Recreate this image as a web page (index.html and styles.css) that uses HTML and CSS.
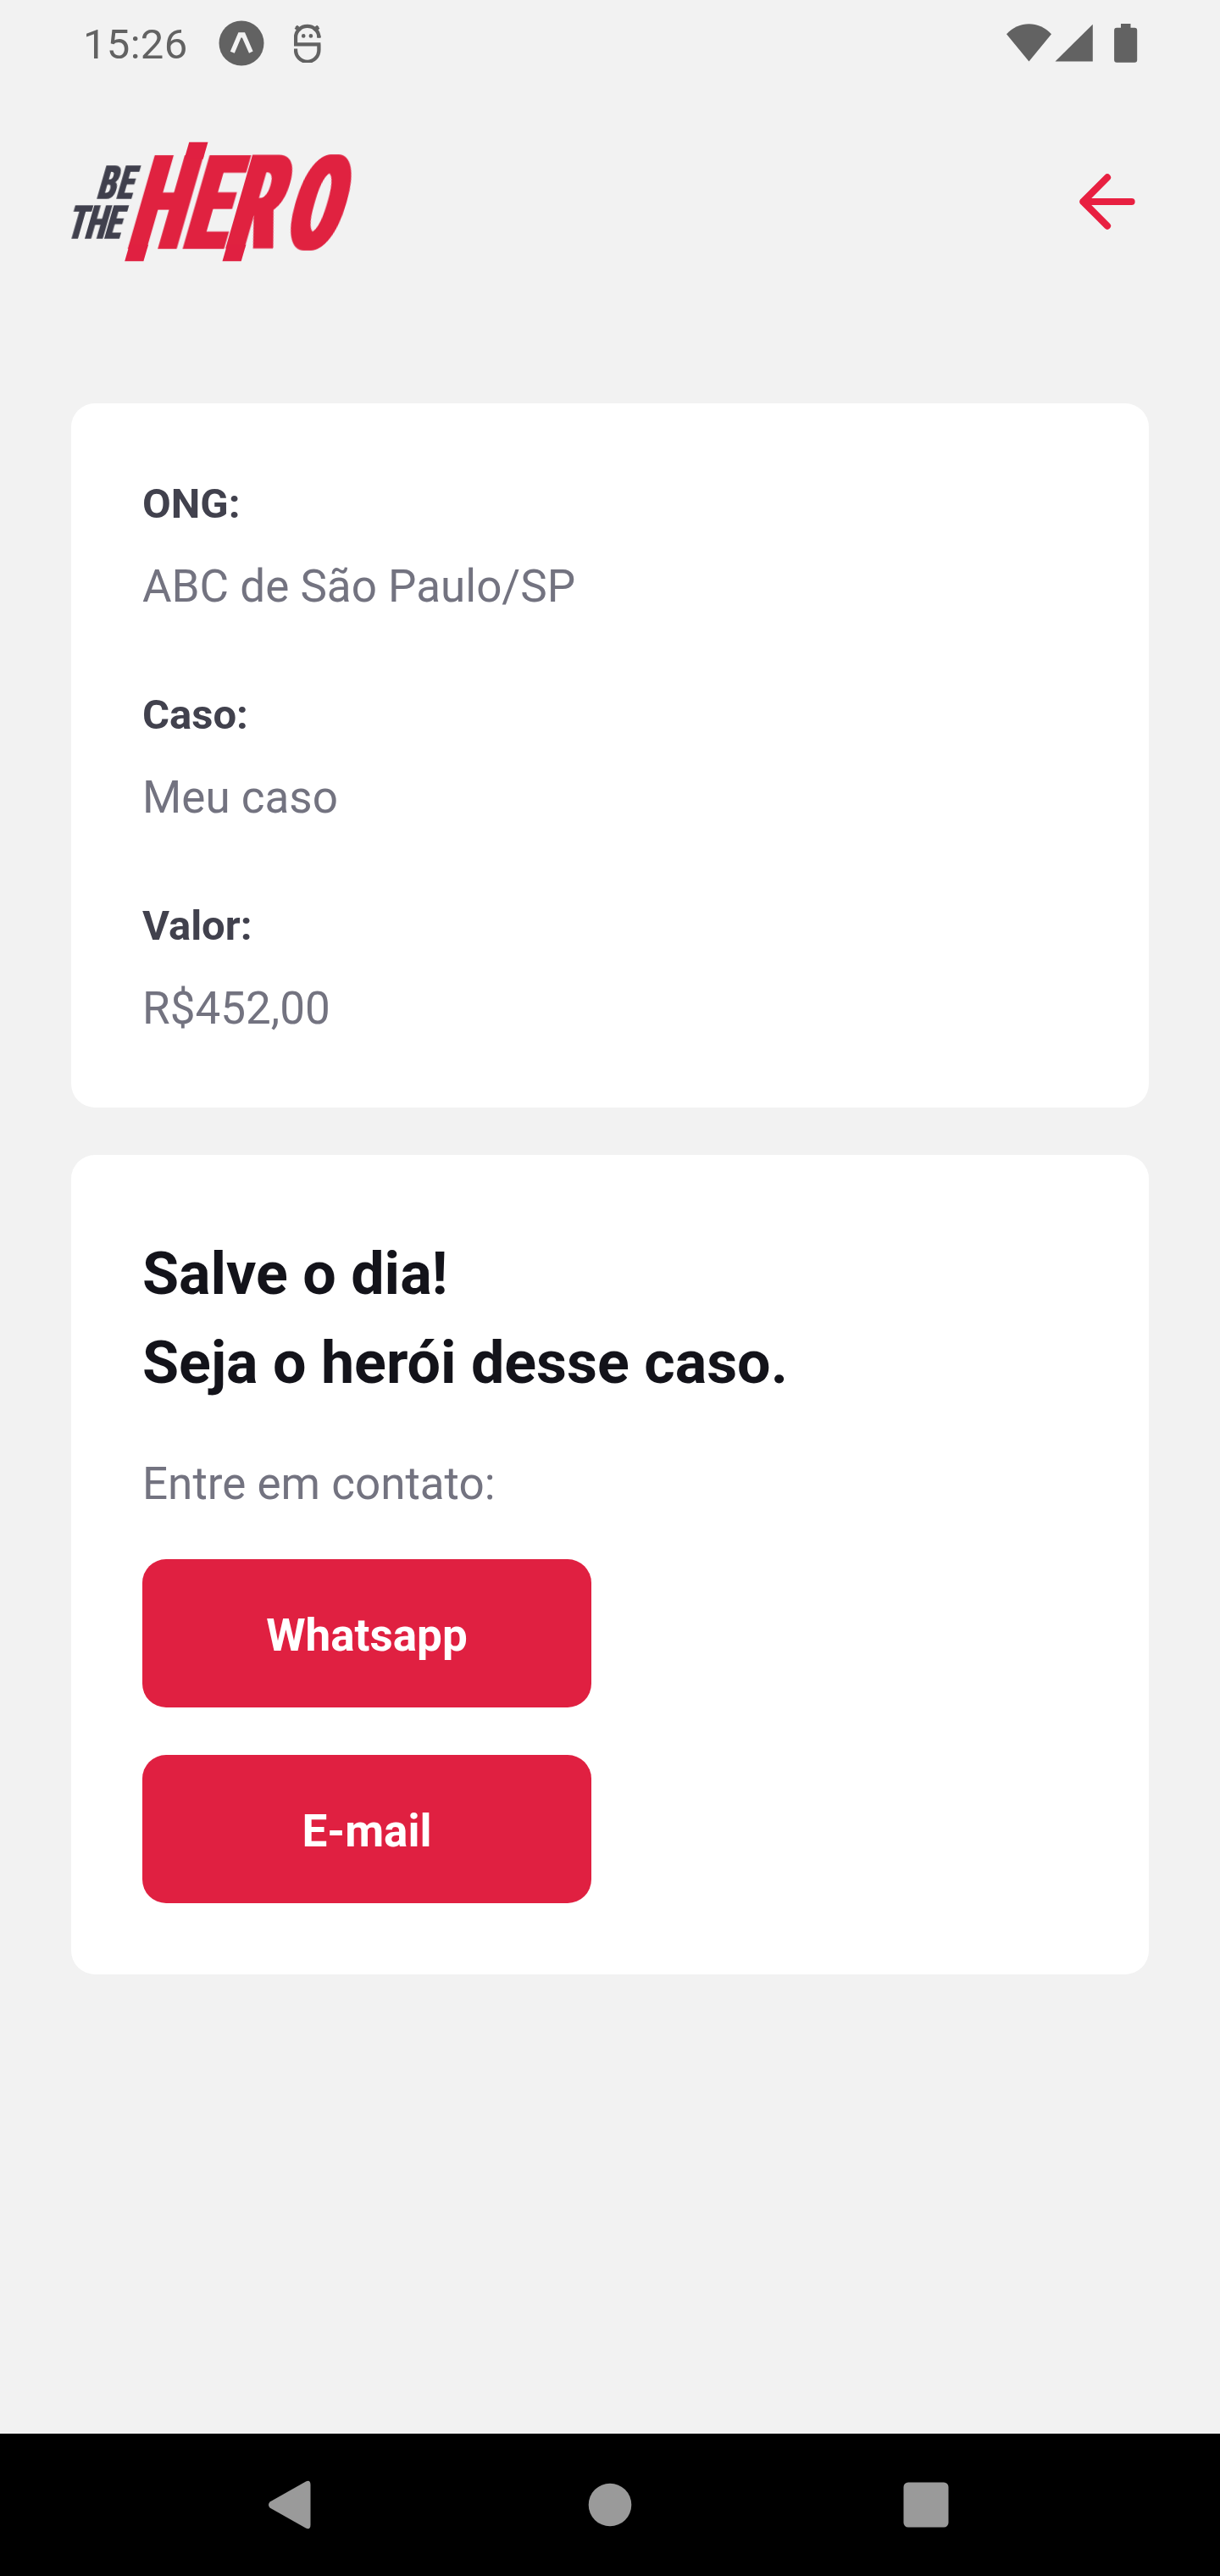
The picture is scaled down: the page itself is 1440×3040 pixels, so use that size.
FILE: index.html
```html
<!DOCTYPE html>
<html lang="pt-BR">
<head>
<meta charset="utf-8">
<title>Be The Hero</title>
<link rel="stylesheet" href="styles.css">
</head>
<body>
<div class="screen">
  <div class="status-bar">
    <span class="clock">15:26</span>
    <svg class="expo-icon" width="54" height="54" viewBox="0 0 54 54">
      <circle cx="27" cy="27" r="26.5" fill="#626262"/>
      <path d="M13.800 36.800 23.400 14.200h7.600L40.600 36.400 36 38.800 27.900 20.400h-1.400L18.800 38.800z" fill="#f2f2f2"/>
    </svg>
    <svg class="s-icon" width="32" height="46" viewBox="0 0 32 46" fill="none" stroke="#626262" stroke-width="4.300">
      <path d="M2 26.200V16a13.600 13 0 0 1 27.400 0M0 24.300h31.400M29.400 24.300v6.600a13.600 13.800 0 0 1-27.400 0V29.500"/>
      <path d="M29.400 14v2.800"/>
      <path d="m2.400 3 5.400 5M28.600 3l-5.200 5M1.800 6.600 5 2.600M29.200 6.600 26 2.600" stroke-width="3"/>
      <circle cx="11.200" cy="14.400" r="2.300" fill="#626262" stroke="none"/>
      <circle cx="19.900" cy="14.400" r="2.300" fill="#626262" stroke="none"/>
    </svg>
    <svg class="signals" width="156" height="48" viewBox="0 0 156 48" fill="#626262">
      <path d="M0 12.300C14.500-3.800 38.500-3.800 53 12.300L26.500 44.500z"/>
      <path d="M57.500 44.500 101.800.8v43.700z"/>
      <path d="M135 0h11.500v4.800h4.700a3 3 0 0 1 3 3v35a3 3 0 0 1-3 3h-21.100a3 3 0 0 1-3-3v-35a3 3 0 0 1 3-3h4.900z"/>
    </svg>
  </div>

  <header class="header">
    <svg class="logo" width="336" height="140" viewBox="0 0 336 140" role="img" aria-label="Be The Hero">
      <defs>
        <filter id="widen-lg" x="-10%" y="-10%" width="120%" height="120%"><feMorphology operator="dilate" radius="6.500 0"/></filter>
        <filter id="widen-sm" x="-10%" y="-10%" width="120%" height="120%"><feMorphology operator="dilate" radius="1.600 0"/></filter>
      </defs>
      <g class="logo-dark">
        <g transform="translate(0 66.700) skewX(-16.100) scale(.58 1)"><text class="logo-small" x="50.800 90.500" y="0">BE</text></g>
        <g transform="translate(0 113.700) skewX(-16.100) scale(.58 1)"><text class="logo-small" x="-10.500 26.500 66" y="0">THE</text></g>
      </g>
      <g class="logo-red">
        <g transform="translate(0 125.700) skewX(-16.100)">
          <g transform="scale(.54 1)"><text class="logo-large" x="122.800 242.400 336.300 463.500" y="0">HERO</text></g>
          <rect x="67.400" y="-5" width="22.200" height="19.500"/>
          <rect x="102.900" y="-126" width="22.200" height="20"/>
          <rect x="182.700" y="-5" width="22.200" height="19.500"/>
        </g>
      </g>
    </svg>
    <svg class="back" width="98" height="98" viewBox="0 0 24 24" fill="none" stroke="#e82041" stroke-width="2" stroke-linecap="round" stroke-linejoin="round">
      <path d="M19 12H5M12 19l-7-7 7-7"/>
    </svg>
  </header>

  <main class="content">
    <section class="card incident">
      <div class="field"><div class="label">ONG:</div><div class="value">ABC de São Paulo/SP</div></div>
      <div class="field"><div class="label">Caso:</div><div class="value">Meu caso</div></div>
      <div class="field"><div class="label">Valor:</div><div class="value">R$452,00</div></div>
    </section>
    <section class="card contact">
      <h1 class="title">Salve o dia!<br>Seja o herói desse caso.</h1>
      <p class="value hint">Entre em contato:</p>
      <div class="actions">
        <a class="action">Whatsapp</a>
        <a class="action">E-mail</a>
      </div>
    </section>
  </main>

  <nav class="nav-bar">
    <svg width="50" height="58" viewBox="0 0 50 58" fill="#9a9a9a"><path d="M1.500 25.500 44 1.500q5.500-2.500 5.500 4v47q0 6.500-5.500 4L1.500 32.500q-3-3.500 0-7z"/></svg>
    <svg class="nav-home" width="52" height="52" viewBox="0 0 52 52" fill="#9a9a9a"><circle cx="26" cy="26" r="25.300"/></svg>
    <svg width="54" height="54" viewBox="0 0 54 54" fill="#9a9a9a"><rect x=".5" y=".5" width="53" height="53" rx="5.500"/></svg>
  </nav>
</div>
</body>
</html>
```
FILE: styles.css
```css
* {
  box-sizing: border-box;
}

body {
  margin: 0;
  background: #f2f2f2;
  font-family: Roboto, "Liberation Sans", sans-serif;
}

.screen {
  display: flex;
  flex-direction: column;
  width: 1440px;
  height: 3040px;
}

.status-bar {
  display: flex;
  align-items: flex-start;
  height: 84px;
  padding: 24px 96px 0 98px;
}

.clock {
  width: 123px;
  color: #626262;
  font-size: 49px;
  letter-spacing: 0.3px;
  line-height: 58px;
}

.expo-icon {
  margin-left: 37px;
}

.s-icon {
  margin: 4px 0 0 35px;
}

.signals {
  margin: 4px 0 0 auto;
}

.header {
  display: flex;
  align-items: center;
  justify-content: space-between;
  padding: 84px 84px 0;
}

.logo {
  display: block;
  overflow: visible;
}

.logo text {
  font-weight: 900;
}

.logo-dark {
  fill: #41414d;
}

.logo-red {
  fill: #e02041;
}

.logo-small {
  font-size: 56px;
  filter: url(#widen-sm);
}

.logo-large {
  font-size: 155px;
  filter: url(#widen-lg);
}

.content {
  display: flex;
  flex: 1;
  flex-direction: column;
  gap: 56px;
  padding: 168px 84px 0;
}

.card {
  border-radius: 28px;
  background: #fff;
}

.incident {
  display: flex;
  flex-direction: column;
  gap: 92px;
  padding: 90px 84px 86px;
}

.field {
  display: flex;
  flex-direction: column;
  gap: 37px;
}

.label {
  color: #41414d;
  font-size: 49px;
  font-weight: 700;
  line-height: 58px;
}

.value {
  color: #737380;
  font-size: 53px;
  line-height: 62px;
}

.contact {
  padding: 88px 84px 84px;
}

.title {
  margin: 0;
  color: #13131a;
  font-size: 70px;
  font-weight: 700;
  line-height: 105px;
}

.hint {
  margin: 59px 0 58px;
}

.actions {
  display: flex;
  flex-direction: column;
  gap: 56px;
}

.action {
  display: flex;
  align-items: center;
  justify-content: center;
  width: 48%;
  height: 175px;
  padding-top: 5px;
  border-radius: 28px;
  background: #e02041;
  color: #fff;
  font-size: 53px;
  font-weight: 700;
}

.nav-bar {
  display: flex;
  align-items: center;
  justify-content: space-between;
  height: 168px;
  padding: 0 320px 0 317px;
  background: #000;
}

.nav-home {
  margin-left: 7px;
}
```
